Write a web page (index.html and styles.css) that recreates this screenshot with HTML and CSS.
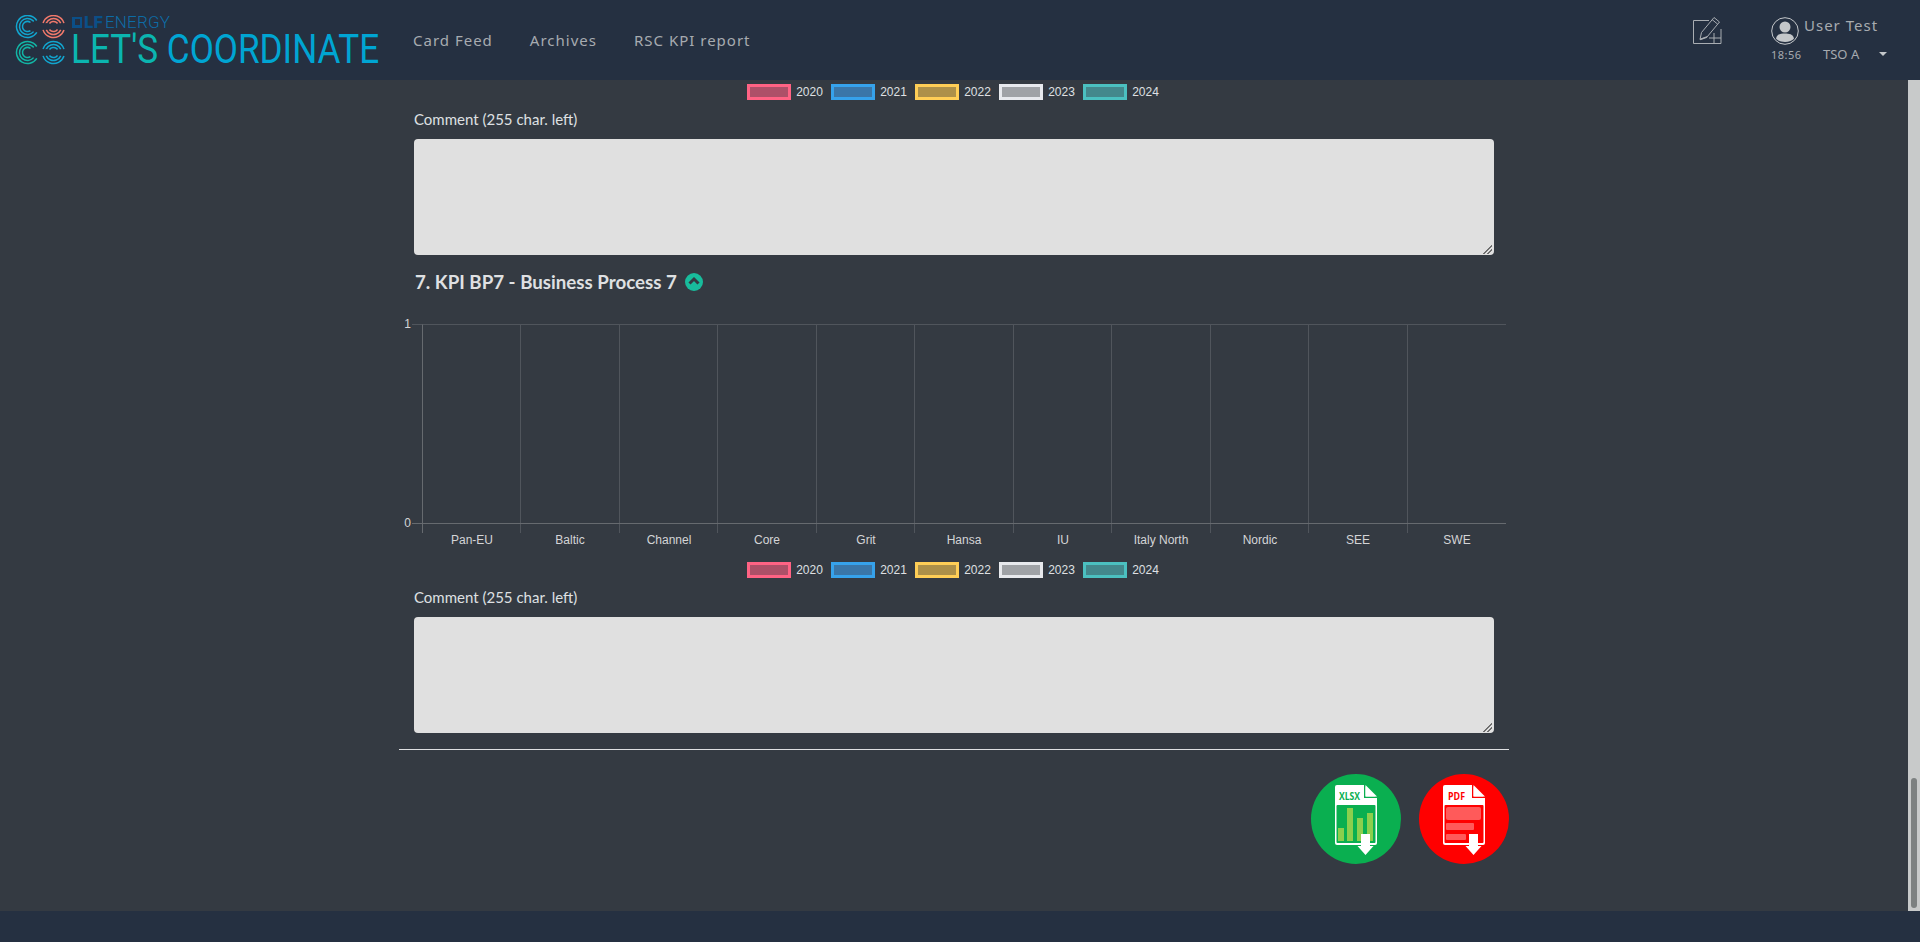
FILE: index.html
```html
<!DOCTYPE html>
<html>
<head>
    <title>RSC KPI report</title>
    <link rel="stylesheet" href="styles.css">
</head>
<body>
    <header class="topbar">
        <div class="logo">
            <svg class="logo-rings" width="50" height="50" viewBox="0 0 50 50" fill="none">
                <defs>
                    <g id="ringOpen">
                        <circle r="11" pathLength="100" stroke-dasharray="82 18" transform="rotate(32)"/>
                        <circle r="8" pathLength="100" stroke-dasharray="78 22" transform="rotate(40)"/>
                        <circle r="5" pathLength="100" stroke-dasharray="70 30" transform="rotate(54)"/>
                    </g>
                    <g id="ringSplit">
                        <circle r="11" pathLength="100" stroke-dasharray="40 10" transform="rotate(18)"/>
                        <circle r="8" pathLength="100" stroke-dasharray="36 14" transform="rotate(25)"/>
                        <circle r="5" pathLength="100" stroke-dasharray="30 20" transform="rotate(36)"/>
                    </g>
                </defs>
                <use class="ring-blue" href="#ringOpen" x="12.500" y="11.500"/>
                <use class="ring-salmon" href="#ringSplit" x="38.500" y="11.500"/>
                <use class="ring-teal" href="#ringOpen" x="12.500" y="37.500"/>
                <use class="ring-blue" href="#ringSplit" x="38.500" y="37.500"/>
            </svg>
            <div class="logo-text">
                <div class="lf-line"><span class="lf-box"></span><b>LF</b>ENERGY</div>
                <div class="logo-title"><span class="teal">LET'S</span> COORDINATE</div>
            </div>
        </div>
        <nav class="menu">
            <a href="#">Card Feed</a>
            <a href="#">Archives</a>
            <a href="#">RSC KPI report</a>
        </nav>
        <div class="topbar-right">
            <svg class="new-card" width="30" height="30" viewBox="0 0 30 30" fill="none" stroke="#a9adb2" stroke-width="1">
                <path d="M17 5.500H1.500V28.500H29V14"/>
                <path d="M8 24.500L9.500 17.500L22 2.500L27.500 7L15 22Z"/>
                <path d="M20 4.500L25.500 9"/>
                <path d="M8 24.500L15 22" stroke-width="1.500"/>
                <path d="M22 18V28M17 23H29"/>
            </svg>
            <div class="user-box">
                <div class="user-top">
                    <svg width="28" height="28" viewBox="0 0 28 28">
                        <circle cx="14" cy="14" r="13.300" fill="none" stroke="#c4c7ca" stroke-width="1"/>
                        <circle cx="14" cy="10" r="5.500" fill="#c4c7ca"/>
                        <path d="M5 21.500C6 17 10 16.500 14 16.500S22 17 23 21.500C20 26 8 26 5 21.500Z" fill="#c4c7ca"/>
                    </svg>
                    <span class="user-name">User Test</span>
                </div>
                <div class="user-bottom">
                    <span class="clock">18:56</span>
                    <span class="entity">TSO A</span>
                    <span class="caret"></span>
                </div>
            </div>
        </div>
    </header>

    <div class="middle">
        <main class="content">
            <div class="legend legend-top">
                <span class="key"><i class="swatch s2020"></i>2020</span>
                <span class="key"><i class="swatch s2021"></i>2021</span>
                <span class="key"><i class="swatch s2022"></i>2022</span>
                <span class="key"><i class="swatch s2023"></i>2023</span>
                <span class="key"><i class="swatch s2024"></i>2024</span>
            </div>
            <label class="comment-label">Comment (255 char. left)</label>
            <textarea class="comment"></textarea>

            <h2 class="kpi-title">7. KPI BP7 - Business Process 7
                <svg class="collapse" width="18" height="18" viewBox="0 0 18 18">
                    <circle cx="9" cy="9" r="9" fill="#18bc9c"/>
                    <path d="M4.500 10.500L9 6L13.500 10.500" fill="none" stroke="#343a42" stroke-width="3"/>
                </svg>
            </h2>

            <svg class="chart" width="1110" height="238" viewBox="0 0 1110 238">
                <g transform="translate(0 3)">
                    <g class="grid">
                        <path d="M13 5.500H1107"/>
                        <path d="M121.500 5.500V214M220.500 5.500V214M318.500 5.500V214M417.500 5.500V214M515.500 5.500V214M614.500 5.500V214M712.500 5.500V214M811.500 5.500V214M909.500 5.500V214M1008.500 5.500V214"/>
                    </g>
                    <path class="axis" d="M13 204.500H1107"/>
                    <path class="axis" d="M23.500 5.500V214"/>
                    <text class="tick" x="12" y="9" text-anchor="end">1</text>
                    <text class="tick" x="12" y="208" text-anchor="end">0</text>
                    <g class="tick" text-anchor="middle">
                        <text x="73" y="225">Pan-EU</text>
                        <text x="171" y="225">Baltic</text>
                        <text x="270" y="225">Channel</text>
                        <text x="368" y="225">Core</text>
                        <text x="467" y="225">Grit</text>
                        <text x="565" y="225">Hansa</text>
                        <text x="664" y="225">IU</text>
                        <text x="762" y="225">Italy North</text>
                        <text x="861" y="225">Nordic</text>
                        <text x="959" y="225">SEE</text>
                        <text x="1058" y="225">SWE</text>
                    </g>
                </g>
            </svg>

            <div class="legend">
                <span class="key"><i class="swatch s2020"></i>2020</span>
                <span class="key"><i class="swatch s2021"></i>2021</span>
                <span class="key"><i class="swatch s2022"></i>2022</span>
                <span class="key"><i class="swatch s2023"></i>2023</span>
                <span class="key"><i class="swatch s2024"></i>2024</span>
            </div>
            <label class="comment-label">Comment (255 char. left)</label>
            <textarea class="comment"></textarea>

            <hr class="divider">

            <div class="exports">
                <button class="export xlsx" type="button">
                    <svg width="44" height="72" viewBox="0 0 44 72">
                        <path d="M3 2H30L43 15V60Q43 62 41 62H3Q1 62 1 60V4Q1 2 3 2Z" fill="#fff"/>
                        <rect x="2.500" y="22" width="39" height="38" rx="1" fill="#0aaf50"/>
                        <path d="M30 2V15H43V13.500H31.500V2Z" fill="#0aaf50"/>
                        <path d="M31.500 2L43 13.500H31.500Z" fill="#fff"/>
                        <text class="file-type green" x="5" y="17" textLength="21" lengthAdjust="spacingAndGlyphs">XLSX</text>
                        <rect x="4" y="45" width="6" height="13" fill="#8ccf4d"/>
                        <rect x="13" y="25" width="6" height="33" fill="#8ccf4d"/>
                        <rect x="23" y="35" width="6" height="23" fill="#8ccf4d"/>
                        <rect x="33" y="30" width="6" height="28" fill="#8ccf4d"/>
                        <path d="M27 51H36V63H39.500L31.500 72L23.500 63H27Z" fill="#fff"/>
                    </svg>
                </button>
                <button class="export pdf" type="button">
                    <svg width="44" height="72" viewBox="0 0 44 72">
                        <path d="M3 2H30L43 15V60Q43 62 41 62H3Q1 62 1 60V4Q1 2 3 2Z" fill="#fff"/>
                        <rect x="2.500" y="22" width="39" height="38" rx="1" fill="#f00"/>
                        <path d="M30 2V15H43V13.500H31.500V2Z" fill="#f00"/>
                        <path d="M31.500 2L43 13.500H31.500Z" fill="#fff"/>
                        <text class="file-type red" x="6" y="17" textLength="17" lengthAdjust="spacingAndGlyphs">PDF</text>
                        <rect x="4" y="24" width="35" height="13" rx="2" fill="#ff5a5a"/>
                        <rect x="4" y="40" width="28" height="7" rx="1" fill="#ff5a5a"/>
                        <rect x="4" y="51" width="20" height="6" rx="1" fill="#ff5a5a"/>
                        <path d="M27 51H36V63H39.500L31.500 72L23.500 63H27Z" fill="#fff"/>
                    </svg>
                </button>
            </div>
        </main>
        <div class="scrollbar"><div class="thumb"></div></div>
    </div>

    <footer class="bottombar"></footer>
</body>
</html>
```

FILE: styles.css
```css
html, body {
    height: 100%;
}
body {
    margin: 0;
    display: flex;
    flex-direction: column;
    background-color: #343a42;
    font-family: Lato, sans-serif;
    overflow: hidden;
}

/* top bar */
.topbar {
    flex: 0 0 80px;
    display: flex;
    align-items: flex-start;
    background-color: #253041;
}
.logo {
    display: flex;
    width: 413px;
    padding: 15px 0 0 15px;
    box-sizing: border-box;
}
.logo-rings {
    flex: none;
    stroke-width: 1.500;
}
.ring-blue { stroke: #12a5cf; }
.ring-salmon { stroke: #f0796b; }
.ring-teal { stroke: #13b5a5; }
.logo-text {
    margin-left: 7px;
    white-space: nowrap;
}
.lf-line {
    display: flex;
    align-items: center;
    height: 14px;
    font-family: Roboto, sans-serif;
    font-size: 17px;
    line-height: 14px;
    font-weight: 300;
    letter-spacing: 0.2px;
    color: #0d6ca6;
}
.lf-line b {
    font-weight: 900;
    color: #0b4f87;
    margin-right: 2px;
}
.lf-box {
    width: 5px;
    height: 6px;
    border: 2px solid #0b4f87;
    border-left-width: 3px;
    border-bottom-width: 3px;
    margin-right: 2px;
}
.logo-title {
    margin-left: -1px;
    font-family: Roboto, sans-serif;
    font-size: 41px;
    line-height: 41px;
    color: #00a5d3;
    transform: scaleX(0.856);
    transform-origin: left center;
}
.teal {
    color: #0bb5b0;
}
.menu {
    display: flex;
    gap: 37px;
    padding-top: 29px;
}
.menu a {
    font-family: "Noto Sans", sans-serif;
    font-size: 15px;
    line-height: 22px;
    letter-spacing: 1px;
    color: #a7abb0;
    text-decoration: none;
}
.topbar-right {
    display: flex;
    margin-left: auto;
    padding-right: 26px;
}
.new-card {
    margin: 15px 49px 0 0;
}
.user-box {
    width: 123px;
    padding-top: 17px;
    color: #a7abb0;
    font-family: "Noto Sans", sans-serif;
}
.user-top {
    display: flex;
    height: 28px;
}
.user-name {
    margin: -2px 0 0 5px;
    font-size: 15px;
    line-height: 20px;
    letter-spacing: 1px;
}
.user-bottom {
    display: flex;
    align-items: center;
    height: 18px;
}
.clock {
    width: 52px;
    font-size: 11px;
    letter-spacing: 0.5px;
}
.entity {
    width: 56px;
    font-size: 13px;
}
.caret {
    border: 4px solid transparent;
    border-top-color: #c4c7ca;
    border-bottom-width: 0;
}

/* scrolling part */
.middle {
    flex: 1;
    display: flex;
    min-height: 0;
}
.content {
    flex: 1;
    padding: 0 0 0 399px;
    overflow: hidden;
}
.scrollbar {
    flex: 0 0 12px;
    display: flex;
    align-items: flex-end;
    justify-content: center;
    padding-bottom: 3px;
    box-sizing: border-box;
    background-color: #c8caca;
}
.thumb {
    width: 6px;
    height: 130px;
    border-radius: 3px;
    background-color: #7d8181;
}
.bottombar {
    flex: 0 0 31px;
    background-color: #253041;
}

/* legend */
.legend {
    display: flex;
    justify-content: center;
    gap: 8.300px;
    width: 1108px;
    height: 16px;
    font-family: "Liberation Sans", sans-serif;
    font-size: 12px;
    color: #dfe0e2;
}
.legend-top {
    margin-top: 4px;
}
.key {
    display: flex;
    align-items: center;
    gap: 5px;
    line-height: 16px;
}
.swatch {
    display: block;
    width: 44px;
    height: 16px;
    border: 3px solid;
    box-sizing: border-box;
}
.s2020 { border-color: #ff6384; background-color: #ad5068; }
.s2021 { border-color: #36a2eb; background-color: #3a76a8; }
.s2022 { border-color: #ffce56; background-color: #ad9049; }
.s2023 { border-color: #e7e9ed; background-color: #9fa2a6; }
.s2024 { border-color: #4bc0c0; background-color: #43888c; }

/* comments */
.comment-label {
    display: block;
    margin: 9px 0 0 15px;
    font-size: 15px;
    line-height: 20px;
    color: #dfe0e2;
}
.comment {
    display: block;
    width: 1080px;
    height: 116px;
    margin: 10px 0 0 15px;
    padding: 0;
    border: 0;
    border-radius: 4px;
    box-sizing: border-box;
    resize: none;
    background-color: #e0e0e0;
    background-image: linear-gradient(135deg, #e0e0e0 50%, transparent 50%),
        repeating-linear-gradient(135deg, #6f6f6f 0 1px, transparent 1px 3px);
    background-size: 11px 11px;
    background-position: right 2px bottom 1px;
    background-repeat: no-repeat;
}
.kpi-title {
    display: flex;
    align-items: center;
    gap: 8px;
    margin: 16px 0 0 16px;
    height: 22px;
    font-size: 18.720px;
    font-weight: 700;
    color: #dfe0e2;
}
.chart {
    display: block;
    margin-top: 23px;
}
.grid path {
    stroke: #50555c;
    fill: none;
}
.axis {
    stroke: #666a6f;
    fill: none;
}
.tick text, text.tick {
    font-family: "Liberation Sans", sans-serif;
    font-size: 12px;
    fill: #d4d5d7;
}
.chart + .legend {
    margin-top: 8px;
}
.divider {
    width: 1110px;
    height: 1px;
    margin: 16px 0 0 0;
    border: 0;
    background-color: #dfe0e2;
}

/* export buttons */
.exports {
    display: flex;
    justify-content: flex-end;
    gap: 18px;
    width: 1110px;
    margin-top: 24px;
}
.export {
    display: flex;
    align-items: center;
    justify-content: center;
    width: 90px;
    height: 90px;
    padding: 0;
    border: 0;
    border-radius: 50%;
    cursor: pointer;
}
.xlsx {
    background-color: #0aaf50;
}
.pdf {
    background-color: #f00;
}
.file-type {
    font-family: "Open Sans", sans-serif;
    font-size: 11px;
    font-weight: 700;
}
.green {
    fill: #0aaf50;
}
.red {
    fill: #f00;
}
```
